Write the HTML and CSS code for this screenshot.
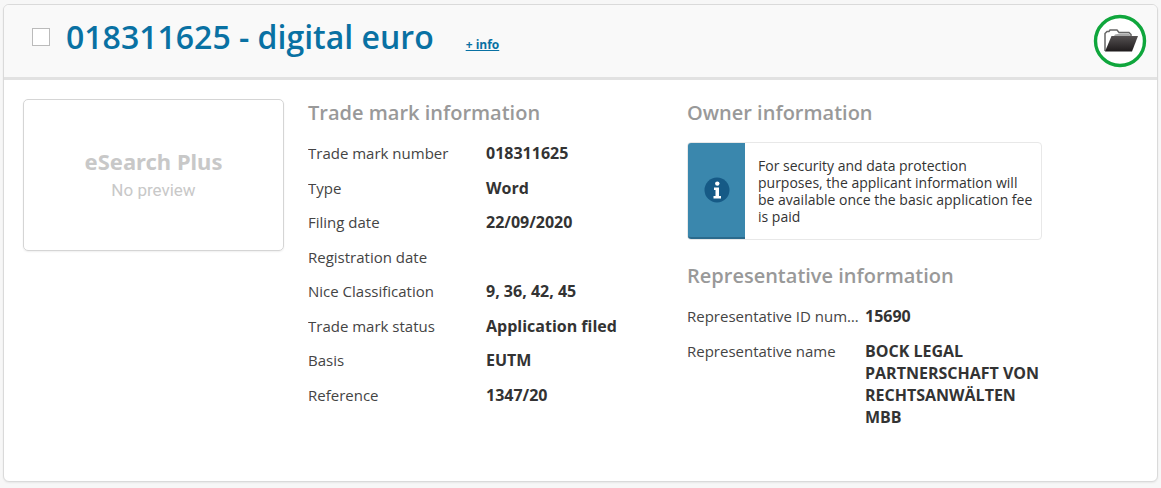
FILE: index.html
```html
<!DOCTYPE html>
<html lang="en">

<head>
  <meta charset="UTF-8">
  <title>018311625 - digital euro</title>
  <link rel="stylesheet" href="styles.css">
</head>

<body>
  <div class="card">

    <div class="header">
      <input type="checkbox" class="select" id="select" aria-label="Select 018311625">
      <h1><label for="select">018311625 - digital euro</label></h1>
      <a class="more" href="#details">+ info</a>
      <button class="folder" type="button" aria-label="Open folder">
        <svg width="54" height="54" viewBox="0 0 54 54">
          <defs>
            <linearGradient id="front" x1="0" y1="0" x2="0" y2="1">
              <stop offset="0" stop-color="#555152" />
              <stop offset="1" stop-color="#1f1b1c" />
            </linearGradient>
          </defs>
          <circle cx="27" cy="27" r="24.5" fill="#fff" stroke="#0fa63c" stroke-width="3.4" />
          <path d="M12 37 V19.5 L14 17.5 H16 L17 16 H24 L26 18.5 H36 L38 20.5 V23" fill="#fff" stroke="#666" stroke-width="1.5" />
          <path d="M27 19.5 H36 L37 21 V22 H21 L22 20.5 Z" fill="#aaa" />
          <path d="M18.5 22 H45 L39 37.5 H12 Z" fill="url(#front)" />
        </svg>
      </button>
    </div>

    <div class="content" id="details">
      <div class="preview">
        <strong>eSearch Plus</strong>
        <span>No preview</span>
      </div>

      <div class="column">
        <h2>Trade mark information</h2>
        <dl>
          <dt>Trade mark number</dt>
          <dd>018311625</dd>
          <dt>Type</dt>
          <dd>Word</dd>
          <dt>Filing date</dt>
          <dd>22/09/2020</dd>
          <dt>Registration date</dt>
          <dd></dd>
          <dt>Nice Classification</dt>
          <dd>9, 36, 42, 45</dd>
          <dt>Trade mark status</dt>
          <dd>Application filed</dd>
          <dt>Basis</dt>
          <dd>EUTM</dd>
          <dt>Reference</dt>
          <dd>1347/20</dd>
        </dl>
      </div>

      <div class="column">
        <h2>Owner information</h2>
        <div class="notice">
          <div class="notice-icon">
            <svg width="26" height="26" viewBox="0 0 26 26" aria-hidden="true">
              <circle cx="13" cy="13" r="12.5" fill="#165a86" />
              <circle cx="13.3" cy="6.6" r="2.2" fill="#fff" />
              <path d="M10 10.5 H15 V19 H17 V21.5 H9.5 V19 H11.5 V13 H10 Z" fill="#fff" />
            </svg>
          </div>
          <p>For security and data protection<br>
            purposes, the applicant information will be available once the basic application fee is paid</p>
        </div>

        <h2>Representative information</h2>
        <dl>
          <dt>Representative ID number</dt>
          <dd>15690</dd>
          <dt>Representative name</dt>
          <dd>BOCK LEGAL PARTNERSCHAFT VON RECHTSANWÄLTEN MBB</dd>
        </dl>
      </div>
    </div>
  </div>
</body>

</html>
```
FILE: styles.css
```css
* {
  box-sizing: border-box;
}

body {
  margin: 0;
  padding: 4px 3px;
  background: #f7f7f7;
  color: #333;
  font-family: "Open Sans", "Noto Sans", sans-serif;
  font-size: 16px;
}

.card {
  background: #fff;
  border: 1px solid #dadada;
  border-radius: 6px;
  box-shadow: 0 1px 2px #0001;
}

.header {
  display: flex;
  align-items: center;
  height: 75px;
  padding: 0 10px 8px 28px;
  background: #f9f9f9;
  border-bottom: 3px solid #e2e2e2;
  border-radius: 5px 5px 0 0;
}

.select {
  appearance: none;
  width: 18px;
  height: 18px;
  margin: 0 16px 0 0;
  background: #fff;
  border: 1px solid #bbb;
}

.select:checked {
  background: #0971a3;
}

h1 {
  margin: 0;
  color: #0971a3;
  font-size: 32px;
  font-weight: 600;
  line-height: 44px;
}

.more {
  margin: 14px auto 0 32px;
  color: #0971a3;
  font-size: 12px;
  font-weight: 700;
}

.folder {
  height: 54px;
  margin-top: 8px;
  padding: 0;
  background: none;
  border: none;
  cursor: pointer;
}

.content {
  display: flex;
  align-items: flex-start;
  gap: 24px;
  padding: 19px 19px 53px;
}

.preview {
  display: flex;
  flex-direction: column;
  align-items: center;
  justify-content: center;
  flex: 0 0 261px;
  height: 152px;
  padding-bottom: 8px;
  border: 1px solid #d5d5d5;
  border-radius: 5px;
  box-shadow: 0 1px 2px #0001;
  color: #c8c8c8;
  font-size: 17px;
  font-family: Roboto, sans-serif;
}

.preview strong {
  font-family: "Noto Sans", sans-serif;
  font-size: 22px;
  line-height: 38px;
}

.column {
  flex: 0 1 355px;
}

h2 {
  margin: 0 0 16px;
  color: #999;
  font-size: 20px;
  font-weight: 600;
  line-height: 27px;
}

dl {
  display: grid;
  grid-template-columns: 172px 1fr;
  gap: 12px 6px;
  margin: 0;
}

dt {
  overflow: hidden;
  color: #444;
  font-size: 15px;
  line-height: 1.5;
  text-overflow: ellipsis;
  white-space: nowrap;
}

dd {
  margin: 0;
  font-weight: 700;
  line-height: 22px;
}

.notice {
  display: flex;
  margin-bottom: 22px;
  border: 1px solid #e8e8e8;
  border-radius: 4px;
}

.notice-icon {
  display: flex;
  align-items: center;
  justify-content: center;
  flex: 0 0 57px;
  background: #3a87ad;
  border-bottom: 2px solid #2b6a8c;
  border-radius: 3px 0 0 3px;
}

.notice p {
  margin: 0;
  padding: 14px 4px 14px 13px;
  font-size: 14px;
  line-height: 17px;
}
```
